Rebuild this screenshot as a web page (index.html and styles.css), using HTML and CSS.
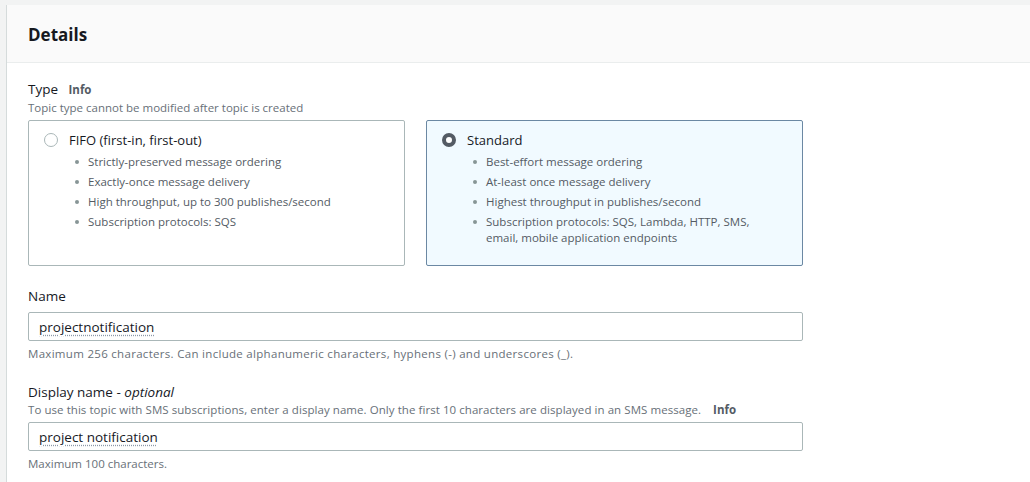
FILE: index.html
```html
<!DOCTYPE html>
<html>
<head>
<meta charset="utf-8">
<link rel="stylesheet" href="styles.css">
</head>
<body>
<div class="card">
  <div class="card-header"><h2 class="title">Details</h2></div>
  <div class="card-body">
    <div class="field">
      <div class="label">Type <span class="info">Info</span></div>
      <div class="desc">Topic type cannot be modified after topic is created</div>
      <div class="tiles">
        <div class="tile">
          <div class="tile-head"><span class="radio"></span><span class="tile-title">FIFO (first-in, first-out)</span></div>
          <ul class="bullets">
            <li>Strictly-preserved message ordering</li>
            <li>Exactly-once message delivery</li>
            <li>High throughput, up to 300 publishes/second</li>
            <li>Subscription protocols: SQS</li>
          </ul>
        </div>
        <div class="tile selected">
          <div class="tile-head"><span class="radio checked"></span><span class="tile-title">Standard</span></div>
          <ul class="bullets">
            <li>Best-effort message ordering</li>
            <li>At-least once message delivery</li>
            <li>Highest throughput in publishes/second</li>
            <li>Subscription protocols: SQS, Lambda, HTTP, SMS, email, mobile application endpoints</li>
          </ul>
        </div>
      </div>
    </div>
    <div class="field name-field">
      <div class="label">Name</div>
      <div class="input"><span class="value">projectnotification</span></div>
      <div class="hint wide">Maximum 256 characters. Can include alphanumeric characters, hyphens (-) and underscores (_).</div>
    </div>
    <div class="field display-field">
      <div class="label">Display name - <em>optional</em></div>
      <div class="desc sms"><span class="sms-text">To use this topic with SMS subscriptions, enter a display name. Only the first 10 characters are displayed in an SMS message.</span> <span class="info">Info</span></div>
      <div class="input"><span class="value">project notification</span></div>
      <div class="hint">Maximum 100 characters.</div>
    </div>
  </div>
</div>
</body>
</html>
```

FILE: styles.css
```css
* { box-sizing: border-box; }
html, body { margin: 0; height: 100%; }
body {
  background: #f2f3f3;
  padding: 5px 0 0 6px;
  font-family: "Open Sans", "Noto Sans", sans-serif;
  color: #16191f;
  overflow: hidden;
}
.card {
  background: #fff;
  border-left: 1px solid #d5dbdb;
  min-height: 100%;
}
.card-header {
  height: 58px;
  background: #fafafa;
  border-bottom: 1px solid #eaeded;
  padding: 0 0 0 21px;
  display: flex;
  align-items: center;
}
.title {
  margin: 0;
  font-size: 17px;
  font-weight: 700;
  line-height: 20px;
  padding-top: 2px;
}
.card-body {
  padding: 16px 0 0 21px;
  width: 796px;
}
.label {
  font-size: 13.5px;
  line-height: 20px;
}
.label em { font-style: italic; }
.info {
  font-size: 11.5px;
  font-weight: 700;
  color: #545b64;
  margin-left: 7px;
}
.desc, .hint {
  font-size: 11.5px;
  line-height: 16px;
  color: #687078;
}
.wide { letter-spacing: 0.3px; }
.sms-text { letter-spacing: 0.06px; }
.desc .info { font-size: 11.5px; margin-left: 9px; }
.tiles {
  display: grid;
  grid-template-columns: 377px 377px;
  column-gap: 21px;
  margin-top: 4px;
}
.tile {
  height: 146px;
  border: 1px solid #aab7b8;
  border-radius: 2px;
  padding: 9px 30px 0 15px;
}
.tile.selected {
  border-color: #6b88a3;
  background: #f1faff;
}
.tile-head {
  display: flex;
  align-items: center;
  gap: 11px;
  height: 20px;
}
.radio {
  width: 14px;
  height: 14px;
  border-radius: 50%;
  border: 1px solid #aab7b8;
  background: #fff;
  flex: none;
}
.radio.checked {
  border: 4px solid #545b64;
}
.tile-title {
  font-size: 13px;
  line-height: 20px;
}
.bullets {
  list-style: none;
  margin: 4px 0 0;
  padding: 0 0 0 44px;
}
.bullets li {
  position: relative;
  font-size: 11.5px;
  line-height: 16px;
  color: #545b64;
  margin-bottom: 4px;
}
.bullets li::before {
  content: "";
  position: absolute;
  left: -13px;
  top: 6px;
  width: 4px;
  height: 4px;
  border-radius: 50%;
  background: #879596;
}
.name-field { margin-top: 20px; }
.display-field { margin-top: 20px; }
.input {
  height: 29px;
  border: 1px solid #aab7b8;
  border-radius: 2px;
  margin-top: 5px;
  padding: 0 10px;
  display: flex;
  align-items: center;
  font-size: 13.5px;
}
.name-field .input { margin-top: 6px; }
.value {
  text-decoration: underline dotted #8d99a8;
  text-underline-offset: 3px;
}
.hint { margin-top: 5px; }
.display-field .input { margin-top: 4px; }
```
